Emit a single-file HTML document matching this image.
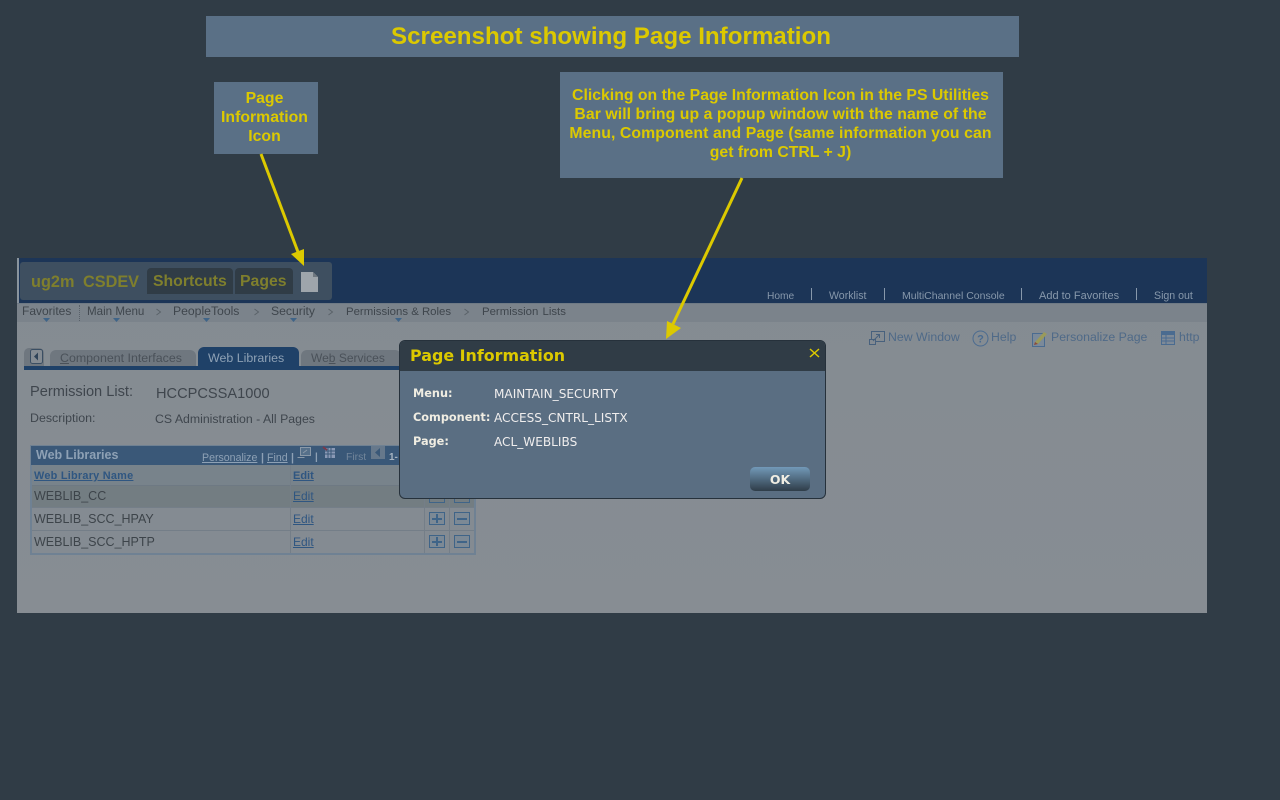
<!DOCTYPE html>
<html><head><meta charset="utf-8"><style>
html,body{margin:0;padding:0}
body{width:1280px;height:800px;position:relative;overflow:hidden;background:#303c46;font-family:"Liberation Sans",sans-serif}
.a{position:absolute}
.t{position:absolute;white-space:nowrap;line-height:14px}
.box{position:absolute;background:#5a7086;color:#dcc900;font-weight:bold;text-align:center}
.nav{font-size:11.7px;color:#3f464d}
.top{font-size:10.6px;color:#8798ab}
.act{font-size:12.3px;color:#4f6a88}
.h{font-size:12.5px;color:#3d444a}
.lnk{font-size:12px;color:#2f5681;text-decoration:underline}
.btn{position:absolute;width:14px;height:11px;border:1px solid #3f6488;box-sizing:content-box}
.btn i{position:absolute;background:#3f6488}
.dl{font:bold 11.3px "DejaVu Sans","Liberation Sans",sans-serif;color:#f0ede2}
.dv{font:12.1px "DejaVu Sans","Liberation Sans",sans-serif;color:#f0eeee}
</style></head><body>

<div class="box" style="left:206px;top:16px;width:813px;height:41px;font-size:24.15px;line-height:42px;padding-right:3px;box-sizing:border-box">Screenshot showing Page Information</div>
<div class="box" style="left:214px;top:82px;width:104px;height:72px;font-size:15.8px;line-height:19px;padding:7px 3px 0 0;box-sizing:border-box">Page<br>Information<br>Icon</div>
<div class="box" style="left:560px;top:72px;width:443px;height:106px;font-size:15.8px;line-height:19px;padding:14px 2px 0 0;box-sizing:border-box">Clicking on the Page Information Icon in the PS Utilities<br><span style="letter-spacing:.06px">Bar will bring up a popup window with the name of the</span><br><span style="letter-spacing:.09px">Menu, Component and Page (same information you can</span><br>get from CTRL + J)</div>

<!-- page -->
<div class="a" style="left:17px;top:258px;width:1190px;height:355px;background:linear-gradient(#848b92,#878d93)"></div>
<div class="a" style="left:17px;top:258px;width:2px;height:45px;background:#8a949d"></div>
<div class="a" style="left:19px;top:258px;width:1188px;height:45px;background:#1c3557"></div>
<div class="a" style="left:17px;top:303px;width:1190px;height:19px;background:#7b838b;border-top:1px solid #6f7a85;box-sizing:border-box"></div>

<!-- header pill -->
<div class="a" style="left:20px;top:262px;width:312px;height:38px;background:#3e4f60;border-radius:3px"></div>
<div class="t" style="left:31px;top:273px;font-size:16.3px;line-height:18px;font-weight:bold;color:#7f7f2d;word-spacing:4px">ug2m CSDEV</div>
<div class="a" style="left:147px;top:268px;width:86px;height:26px;background:#303c46;border-radius:4px 4px 0 0"></div>
<div class="a" style="left:235px;top:268px;width:58px;height:26px;background:#303c46;border-radius:4px 4px 0 0"></div>
<div class="t" style="left:153px;top:273px;font-size:15.8px;line-height:18px;font-weight:bold;color:#7f7f2d">Shortcuts</div>
<div class="t" style="left:240px;top:273px;font-size:15.8px;line-height:18px;font-weight:bold;color:#7f7f2d">Pages</div>
<svg class="a" style="left:300px;top:270px" width="20" height="24"><path d="M1 2H13L18 7V22H1Z" fill="#9ea5ab"/><path d="M13 2L18 7H13Z" fill="#6f7880"/></svg>

<!-- top links -->
<div class="t top" style="left:767px;top:290px;font-size:10.2px">Home</div>
<div class="t top" style="left:829px;top:289px">Worklist</div>
<div class="t top" style="left:902px;top:289px;font-size:10.5px">MultiChannel Console</div>
<div class="t top" style="left:1039px;top:289px;font-size:11px">Add to Favorites</div>
<div class="t top" style="left:1154px;top:289px">Sign out</div>
<div class="a" style="left:811px;top:288px;width:1px;height:12px;background:#8798ab"></div>
<div class="a" style="left:884px;top:288px;width:1px;height:12px;background:#8798ab"></div>
<div class="a" style="left:1021px;top:288px;width:1px;height:12px;background:#8798ab"></div>
<div class="a" style="left:1136px;top:288px;width:1px;height:12px;background:#8798ab"></div>

<!-- nav -->
<div class="t nav" style="left:22px;top:304px;font-size:12px">Favorites</div>
<div class="a" style="left:79px;top:305px;height:16px;border-left:1px dotted #59616a"></div>
<div class="t nav" style="left:87px;top:305px;font-size:11.6px">Main Menu</div>
<div class="t nav" style="left:173px;top:304px;font-size:12.2px">PeopleTools</div>
<div class="t nav" style="left:271px;top:304px;font-size:12.2px">Security</div>
<div class="t nav" style="left:346px;top:305px;font-size:11.4px">Permissions &amp; Roles</div>
<div class="t nav" style="left:482px;top:305px;font-size:11.4px;word-spacing:1px">Permission Lists</div>
<svg class="a" style="left:0;top:306px" width="480" height="10" fill="none" stroke="#5a6269"><path d="M156.500 3l4 3-4 3M254.500 3l4 3-4 3M328.500 3l4 3-4 3M464.500 3l4 3-4 3"/></svg>
<svg class="a" style="left:0;top:317px" width="420" height="6" fill="#3f6488"><path d="M43 1h7l-3.500 4zM113 1h7l-3.500 4zM203 1h7l-3.500 4zM290 1h7l-3.500 4zM395 1h7l-3.500 4z"/></svg>

<!-- actions -->
<svg class="a" style="left:868px;top:330px" width="18" height="16" fill="none" stroke="#48617d"><rect x="3.500" y="1.500" width="13" height="10"/><rect x="1.500" y="9.500" width="6" height="5" fill="#848b92"/><path d="M5 11L11 5M8 4.500h3.500V8"/></svg>
<div class="t act" style="left:888px;top:330px">New Window</div>
<svg class="a" style="left:972px;top:330px" width="17" height="17"><circle cx="8.500" cy="8.500" r="7.500" fill="none" stroke="#4a6b90"/><text x="8.500" y="12.500" text-anchor="middle" font-size="11" font-weight="bold" fill="#4a6b90" font-family="Liberation Sans">?</text></svg>
<div class="t act" style="left:991px;top:330px">Help</div>
<svg class="a" style="left:1032px;top:330px" width="17" height="17"><rect x="0.500" y="3.500" width="12" height="13" fill="#7b8a9a" stroke="#4a6b90"/><path d="M3 12L12 2l3 2-9 10z" fill="#9a9a5a"/><path d="M3 12l-1 3 4-1z" fill="#8a4a3a"/></svg>
<div class="t act" style="left:1051px;top:330px">Personalize Page</div>
<svg class="a" style="left:1161px;top:331px" width="14" height="14"><rect x="0.500" y="0.500" width="13" height="13" fill="#7e8a97" stroke="#4a6b90"/><rect x="1" y="1" width="12" height="3" fill="#4a6b90"/><path d="M1 7h12M1 10h12M5 4v9" stroke="#4a6b90"/></svg>
<div class="t act" style="left:1179px;top:330px">http</div>

<!-- tabs -->
<div class="a" style="left:24px;top:348px;width:20px;height:18px;background:#6f777f;border-radius:5px 5px 0 0"></div>
<svg class="a" style="left:30px;top:349px" width="13" height="15"><rect x="0.500" y="0.500" width="12" height="14" rx="2" fill="#848b92" stroke="#3a4e63"/><path d="M8 3.500v8l-4-4z" fill="#2f4358"/></svg>
<div class="a" style="left:50px;top:350px;width:146px;height:16px;background:#6f777f;border-radius:6px 6px 0 0"></div>
<div class="t" style="left:60px;top:351px;font-size:12.4px;color:#4a5159"><u>C</u>omponent Interfaces</div>
<div class="a" style="left:198px;top:347px;width:101px;height:19px;background:#1f4168;border-radius:6px 6px 0 0"></div>
<div class="t" style="left:208px;top:351px;font-size:12.4px;color:#8ea1b5">Web Libraries</div>
<div class="a" style="left:301px;top:350px;width:100px;height:16px;background:#6f777f;border-radius:6px 6px 0 0"></div>
<div class="t" style="left:311px;top:351px;font-size:12px;color:#4a5159">We<u>b</u> Services</div>
<div class="a" style="left:24px;top:366px;width:380px;height:4px;background:#1f4168"></div>

<div class="t" style="left:30px;top:385px;font-size:14.6px;color:#3f464d">Permission List:</div>
<div class="t" style="left:156px;top:387px;font-size:14.6px;color:#3f464d">HCCPCSSA1000</div>
<div class="t" style="left:30px;top:411px;font-size:12.4px;color:#3f464d">Description:</div>
<div class="t" style="left:155px;top:412px;font-size:12.3px;color:#3f464d">CS Administration - All Pages</div>

<!-- grid -->
<div class="a" style="left:30px;top:445px;width:446px;height:110px;border:2px solid #6f8193;box-sizing:border-box;background:#848b92"></div>
<div class="a" style="left:31px;top:446px;width:444px;height:19px;background:#3a5878"></div>
<div class="t" style="left:36px;top:448px;font-size:12.5px;font-weight:bold;color:#8ea1b5">Web Libraries</div>
<div class="t" style="left:202px;top:451px;font-size:10.6px;color:#8ea1b5"><u>Personalize</u></div>
<div class="t" style="left:261px;top:451px;font-size:10.6px;font-weight:bold;color:#8ea1b5">|</div>
<div class="t" style="left:267px;top:451px;font-size:10.6px;color:#8ea1b5"><u>Find</u></div>
<div class="t" style="left:291px;top:451px;font-size:10.6px;font-weight:bold;color:#8ea1b5">|</div>
<svg class="a" style="left:297px;top:446px" width="16" height="13" fill="none" stroke="#8a99a8"><rect x="3.500" y="1.500" width="10" height="8" fill="#56708a"/><path d="M.5 11.500h7M6 7l4-3"/></svg>
<div class="t" style="left:315px;top:451px;font-size:10px;font-weight:bold;color:#8ea1b5">|</div>
<svg class="a" style="left:322px;top:446px" width="15" height="13"><rect x="3" y="2" width="10" height="10" fill="#8a99b5"/><path d="M3 5h10M3 8h10M6 2v10M9 2v10" stroke="#3a5878"/><path d="M1 1l4 3" stroke="#7a3a4a" stroke-width="2"/></svg>
<div class="t" style="left:346px;top:451px;font-size:10.4px;color:#72859a">First</div>
<div class="a" style="left:371px;top:446px;width:14px;height:13px;background:#66788b"></div>
<svg class="a" style="left:374px;top:448px" width="8" height="9"><path d="M6 0v9L1 4.500z" fill="#3a5878"/></svg>
<div class="t" style="left:389px;top:451px;font-size:10px;font-weight:bold;color:#a6b3c0">1-</div>

<div class="a" style="left:32px;top:465px;width:442px;height:20px;background:#78838b"></div>
<div class="t" style="left:34px;top:469px;font-size:10.9px;font-weight:bold;color:#2f5681;text-decoration:underline;letter-spacing:.25px">Web Library Name</div>
<div class="t" style="left:293px;top:469px;font-size:11px;font-weight:bold;color:#2f5681;text-decoration:underline">Edit</div>
<div class="a" style="left:32px;top:485px;width:442px;height:23px;background:#737d82"></div>
<div class="a" style="left:32px;top:485px;width:442px;height:1px;background:#6e7983"></div>
<div class="a" style="left:32px;top:507px;width:442px;height:1px;background:#747e88"></div>
<div class="a" style="left:32px;top:530px;width:442px;height:1px;background:#747e88"></div>
<div class="a" style="left:290px;top:465px;width:1px;height:88px;background:#747e88"></div>
<div class="a" style="left:424px;top:465px;width:1px;height:88px;background:#747e88"></div>
<div class="a" style="left:449px;top:465px;width:1px;height:88px;background:#747e88"></div>
<div class="t h" style="left:34px;top:489px">WEBLIB_CC</div>
<div class="t h" style="left:34px;top:512px">WEBLIB_SCC_HPAY</div>
<div class="t h" style="left:34px;top:535px">WEBLIB_SCC_HPTP</div>
<div class="t lnk" style="left:293px;top:489px">Edit</div>
<div class="t lnk" style="left:293px;top:512px">Edit</div>
<div class="t lnk" style="left:293px;top:535px">Edit</div>
<div class="btn" style="left:429px;top:512px;background:#7c8995"><i style="left:2px;top:5px;width:10px;height:2px"></i><i style="left:6px;top:1px;width:2px;height:9px"></i></div>
<div class="btn" style="left:454px;top:512px;background:#7c8995"><i style="left:2px;top:5px;width:10px;height:2px"></i></div>
<div class="btn" style="left:429px;top:535px;background:#7c8995"><i style="left:2px;top:5px;width:10px;height:2px"></i><i style="left:6px;top:1px;width:2px;height:9px"></i></div>
<div class="btn" style="left:454px;top:535px;background:#7c8995"><i style="left:2px;top:5px;width:10px;height:2px"></i></div>
<div class="btn" style="left:429px;top:490px"></div>
<div class="btn" style="left:454px;top:490px"></div>

<!-- dialog -->
<div class="a" style="left:399px;top:340px;width:427px;height:159px;background:#5a6e82;border:1px solid #26313b;border-radius:6px;box-sizing:border-box;overflow:hidden">
<div style="height:30px;background:#303c46"></div></div>
<div class="t" style="left:410px;top:346px;font:bold 15.9px/20px 'DejaVu Sans','Liberation Sans',sans-serif;color:#dcc900">Page Information</div>
<svg class="a" style="left:809px;top:348px" width="11" height="10"><path d="M1 1l9 8M10 1l-9 8" stroke="#dcc900" stroke-width="1.500"/></svg>
<div class="t dl" style="left:413px;top:387px">Menu:</div>
<div class="t dl" style="left:413px;top:411px">Component:</div>
<div class="t dl" style="left:413px;top:435px">Page:</div>
<div class="t dv" style="left:494px;top:387px">MAINTAIN_SECURITY</div>
<div class="t dv" style="left:494px;top:411px">ACCESS_CNTRL_LISTX</div>
<div class="t dv" style="left:494px;top:435px">ACL_WEBLIBS</div>
<div class="a" style="left:750px;top:467px;width:60px;height:24px;border-radius:5px;background:linear-gradient(#7299b8,#2f3d49);text-align:center;font:bold 12.5px/25px 'DejaVu Sans','Liberation Sans',sans-serif;color:#f0ede2">OK</div>

<!-- arrows -->
<svg class="a" style="left:0;top:0" width="1280" height="800">
<path d="M261 154L298 252" stroke="#dcc900" stroke-width="3" fill="none"/>
<path d="M304 266L291 254L304 249Z" fill="#dcc900"/>
<path d="M742 178L673 324" stroke="#dcc900" stroke-width="3" fill="none"/>
<path d="M666 339L667 321L681 328Z" fill="#dcc900"/>
</svg>
</body></html>
